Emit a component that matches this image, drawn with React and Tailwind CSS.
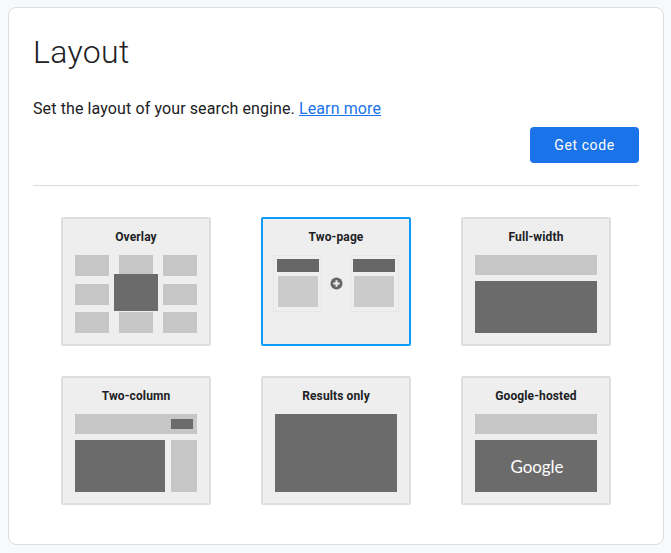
const LIGHT = "bg-[#c6c6c6]";
const DARK = "bg-[#6b6b6b]";

function Tile({ title, selected, children }) {
  return (
    <div
      className={`w-[150px] h-[129px] rounded-[2px] border-2 bg-[#eeeeee] flex flex-col items-center ${
        selected ? "border-[#0d9bf8]" : "border-[#dedede]"
      }`}
    >
      <div className="mt-[10px] h-[16px] leading-[16px] text-[12px] font-bold tracking-[0.12px] text-[#202124] font-['Roboto',sans-serif]">
        {title}
      </div>
      <div className="mt-[10px] w-[122px] h-[78px] relative">{children}</div>
    </div>
  );
}

function Overlay() {
  return (
    <>
      <div className="grid grid-cols-[34px_34px_34px] justify-between grid-rows-[21px_21px_21px] content-between h-[78px]">
        <div className={LIGHT} />
        <div className={LIGHT} />
        <div className={LIGHT} />
        <div className={LIGHT} />
        <div />
        <div className={LIGHT} />
        <div className={LIGHT} />
        <div className={LIGHT} />
        <div className={LIGHT} />
      </div>
      <div className={`absolute left-[39px] top-[19px] w-[44px] h-[37px] ${DARK}`} />
    </>
  );
}

function MiniPage({ second }) {
  return (
    <div
      className={`w-[49px] h-[57px] border border-[#e6e6e6] pt-[3px] flex flex-col items-center ${
        second ? "pr-[1px]" : ""
      }`}
    >
      <div className="w-[42px] h-[13px] bg-[#666666]" />
      <div className="mt-[4px] w-[40px] h-[31px] bg-[#cbcbcb]" />
    </div>
  );
}

function TwoPage() {
  return (
    <div className="flex justify-between items-start -mx-[2px] w-[126px]">
      <MiniPage />
      <div className="h-[57px] flex items-center">
        <svg width="13" height="13" viewBox="0 0 13 13">
          <circle cx="6.5" cy="6.5" r="6" fill="#666666" />
          <path d="M6.5 3.2v6.6M3.2 6.5h6.6" stroke="#eeeeee" strokeWidth="2" />
        </svg>
      </div>
      <MiniPage second />
    </div>
  );
}

function FullWidth({ children }) {
  return (
    <div className="flex flex-col gap-[6px]">
      <div className={`h-[20px] ${LIGHT}`} />
      <div
        className={`h-[52px] ${DARK} flex items-center justify-center pl-[2px] text-white font-normal font-['Lato',sans-serif] text-[17px] tracking-[-0.1px] leading-none`}
      >
        {children}
      </div>
    </div>
  );
}

function TwoColumn() {
  return (
    <div className="flex flex-col gap-[6px]">
      <div className={`h-[20px] ${LIGHT} flex items-center justify-end pr-[4px]`}>
        <div className={`w-[22px] h-[10px] ${DARK}`} />
      </div>
      <div className="h-[52px] flex gap-[6px]">
        <div className={`w-[90px] ${DARK}`} />
        <div className={`w-[26px] ${LIGHT}`} />
      </div>
    </div>
  );
}

export default function App() {
  return (
    <div className="w-[671px] h-[553px] bg-[#f8f9fa] pt-[7px] pl-[8px]">
      <div className="w-[656px] h-[538px] bg-white border border-[#dadce0] rounded-[8px] pt-[22px] px-[24px] flex flex-col">
        <h1 className="text-[32px] leading-[44px] font-light text-[#202124] font-['Roboto',sans-serif] tracking-[0.35px]">
          Layout
        </h1>
        <p className="mt-[23px] text-[16px] leading-[24px] text-[#202124] font-['Roboto',sans-serif] tracking-[0.11px]">
          Set the layout of your search engine.{" "}
          <a href="#" className="text-[#1a73e8] underline">
            Learn more
          </a>
        </p>
        <div className="mt-[6px] flex justify-end">
          <button className="w-[109px] h-[36px] rounded-[4px] bg-[#1a73e8] text-white text-[14px] font-normal tracking-[0.6px] font-['Roboto',sans-serif]">
            Get code
          </button>
        </div>
        <div className="mt-[22px] h-px bg-[#dadce0]" />
        <div className="mt-[31px] px-[28px] grid grid-cols-[150px_150px_150px] justify-between gap-y-[30px]">
          <Tile title="Overlay"><Overlay /></Tile>
          <Tile title="Two-page" selected><TwoPage /></Tile>
          <Tile title="Full-width"><FullWidth /></Tile>
          <Tile title="Two-column"><TwoColumn /></Tile>
          <Tile title="Results only"><div className={`h-[78px] ${DARK}`} /></Tile>
          <Tile title="Google-hosted"><FullWidth>Google</FullWidth></Tile>
        </div>
      </div>
    </div>
  );
}
